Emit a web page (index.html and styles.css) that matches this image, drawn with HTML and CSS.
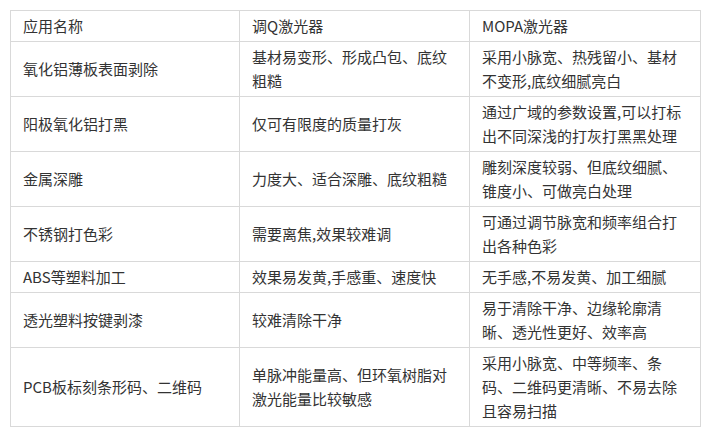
FILE: index.html
```html
<!DOCTYPE html>
<html lang="zh-CN">
<head>
<meta charset="utf-8">
<title>激光器对比</title>
<link rel="stylesheet" href="styles.css">
</head>
<body>
<table class="compare">
  <colgroup>
    <col class="c1"><col class="c2"><col class="c3">
  </colgroup>
  <tbody>
    <tr><td>应用名称</td><td>调Q激光器</td><td>MOPA激光器</td></tr>
    <tr><td>氧化铝薄板表面剥除</td><td>基材易变形、形成凸包、底纹粗糙</td><td>采用小脉宽、热残留小、基材不变形,底纹细腻亮白</td></tr>
    <tr><td>阳极氧化铝打黑</td><td>仅可有限度的质量打灰</td><td>通过广域的参数设置,可以打标出不同深浅的打灰打黑黑处理</td></tr>
    <tr><td>金属深雕</td><td>力度大、适合深雕、底纹粗糙</td><td>雕刻深度较弱、但底纹细腻、锥度小、可做亮白处理</td></tr>
    <tr><td>不锈钢打色彩</td><td>需要离焦,效果较难调</td><td>可通过调节脉宽和频率组合打出各种色彩</td></tr>
    <tr><td>ABS等塑料加工</td><td>效果易发黄,手感重、速度快</td><td>无手感,不易发黄、加工细腻</td></tr>
    <tr><td>透光塑料按键剥漆</td><td>较难清除干净</td><td>易于清除干净、边缘轮廓清晰、透光性更好、效率高</td></tr>
    <tr><td>PCB板标刻条形码、二维码</td><td>单脉冲能量高、但环氧树脂对激光能量比较敏感</td><td>采用小脉宽、中等频率、条码、二维码更清晰、不易去除且容易扫描</td></tr>
  </tbody>
</table>
</body>
</html>
```
FILE: styles.css
```css
html, body {
  margin: 0;
  padding: 0;
  background: #ffffff;
}
body {
  padding: 10px;
  font-family: "Noto Sans CJK SC", "Noto Sans", sans-serif;
  font-size: 15px;
  color: #333333;
}
.compare {
  border-collapse: collapse;
  table-layout: fixed;
  width: 690px;
}
.compare .c1 { width: 229px; }
.compare .c2 { width: 230px; }
.compare .c3 { width: 231px; }
.compare td {
  border: 1px solid #d9d9d9;
  padding: 3px 12px 3px 12px;
  line-height: 24px;
  vertical-align: middle;
  word-break: normal;
}
```
